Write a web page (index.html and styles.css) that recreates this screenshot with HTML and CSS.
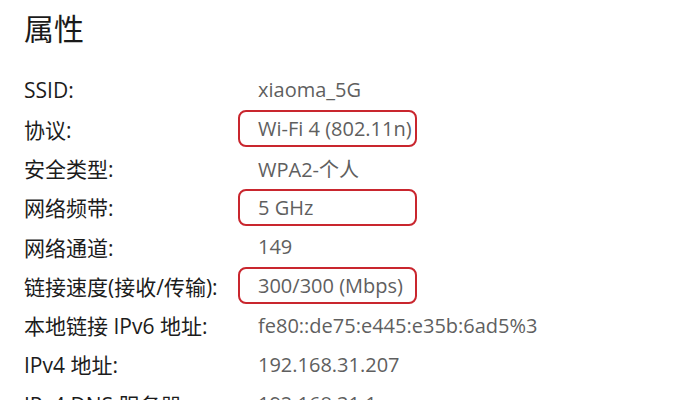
FILE: index.html
```html
<!DOCTYPE html>
<html lang="zh-CN">
<head>
<meta charset="utf-8">
<link rel="stylesheet" href="styles.css">
</head>
<body>
<div class="page">
  <h1 class="title">属性</h1>
  <div class="props">
    <div class="label">SSID:</div><div class="value">xiaoma_5G</div>
    <div class="label">协议:</div><div class="value"><span class="hl">Wi-Fi 4 (802.11n)</span></div>
    <div class="label">安全类型:</div><div class="value">WPA2-个人</div>
    <div class="label">网络频带:</div><div class="value"><span class="hl">5 GHz</span></div>
    <div class="label">网络通道:</div><div class="value">149</div>
    <div class="label">链接速度(接收/传输):</div><div class="value"><span class="hl">300/300 (Mbps)</span></div>
    <div class="label">本地链接 IPv6 地址:</div><div class="value">fe80::de75:e445:e35b:6ad5%3</div>
    <div class="label">IPv4 地址:</div><div class="value">192.168.31.207</div>
    <div class="label">IPv4 DNS 服务器:</div><div class="value">192.168.31.1</div>
  </div>
</div>
</body>
</html>
```
FILE: styles.css
```css
html, body {
  margin: 0;
  padding: 0;
  background: #ffffff;
  overflow: hidden;
}
.page {
  width: 674px;
  height: 400px;
  padding: 7px 0 0 24px;
  box-sizing: border-box;
  font-family: "Open Sans", "Noto Sans CJK SC", sans-serif;
}
.title {
  margin: 0;
  font-family: "Noto Sans CJK SC", sans-serif;
  font-weight: 400;
  font-size: 30px;
  line-height: 40px;
  color: #1a1a1a;
}
.props {
  margin-top: 23px;
  display: grid;
  grid-template-columns: 234px 1fr;
  grid-auto-rows: 39.25px;
  align-items: center;
}
.label {
  color: #1c1c1c;
  font-size: 21px;
  white-space: nowrap;
}
.value {
  color: #5f5f5f;
  font-size: 20px;
  white-space: nowrap;
}
.hl {
  display: inline-block;
  box-sizing: border-box;
  width: 179px;
  height: 37px;
  line-height: 33px;
  margin-left: -20px;
  padding-left: 18px;
  border: 2px solid #c9262e;
  border-radius: 8px;
}
```
